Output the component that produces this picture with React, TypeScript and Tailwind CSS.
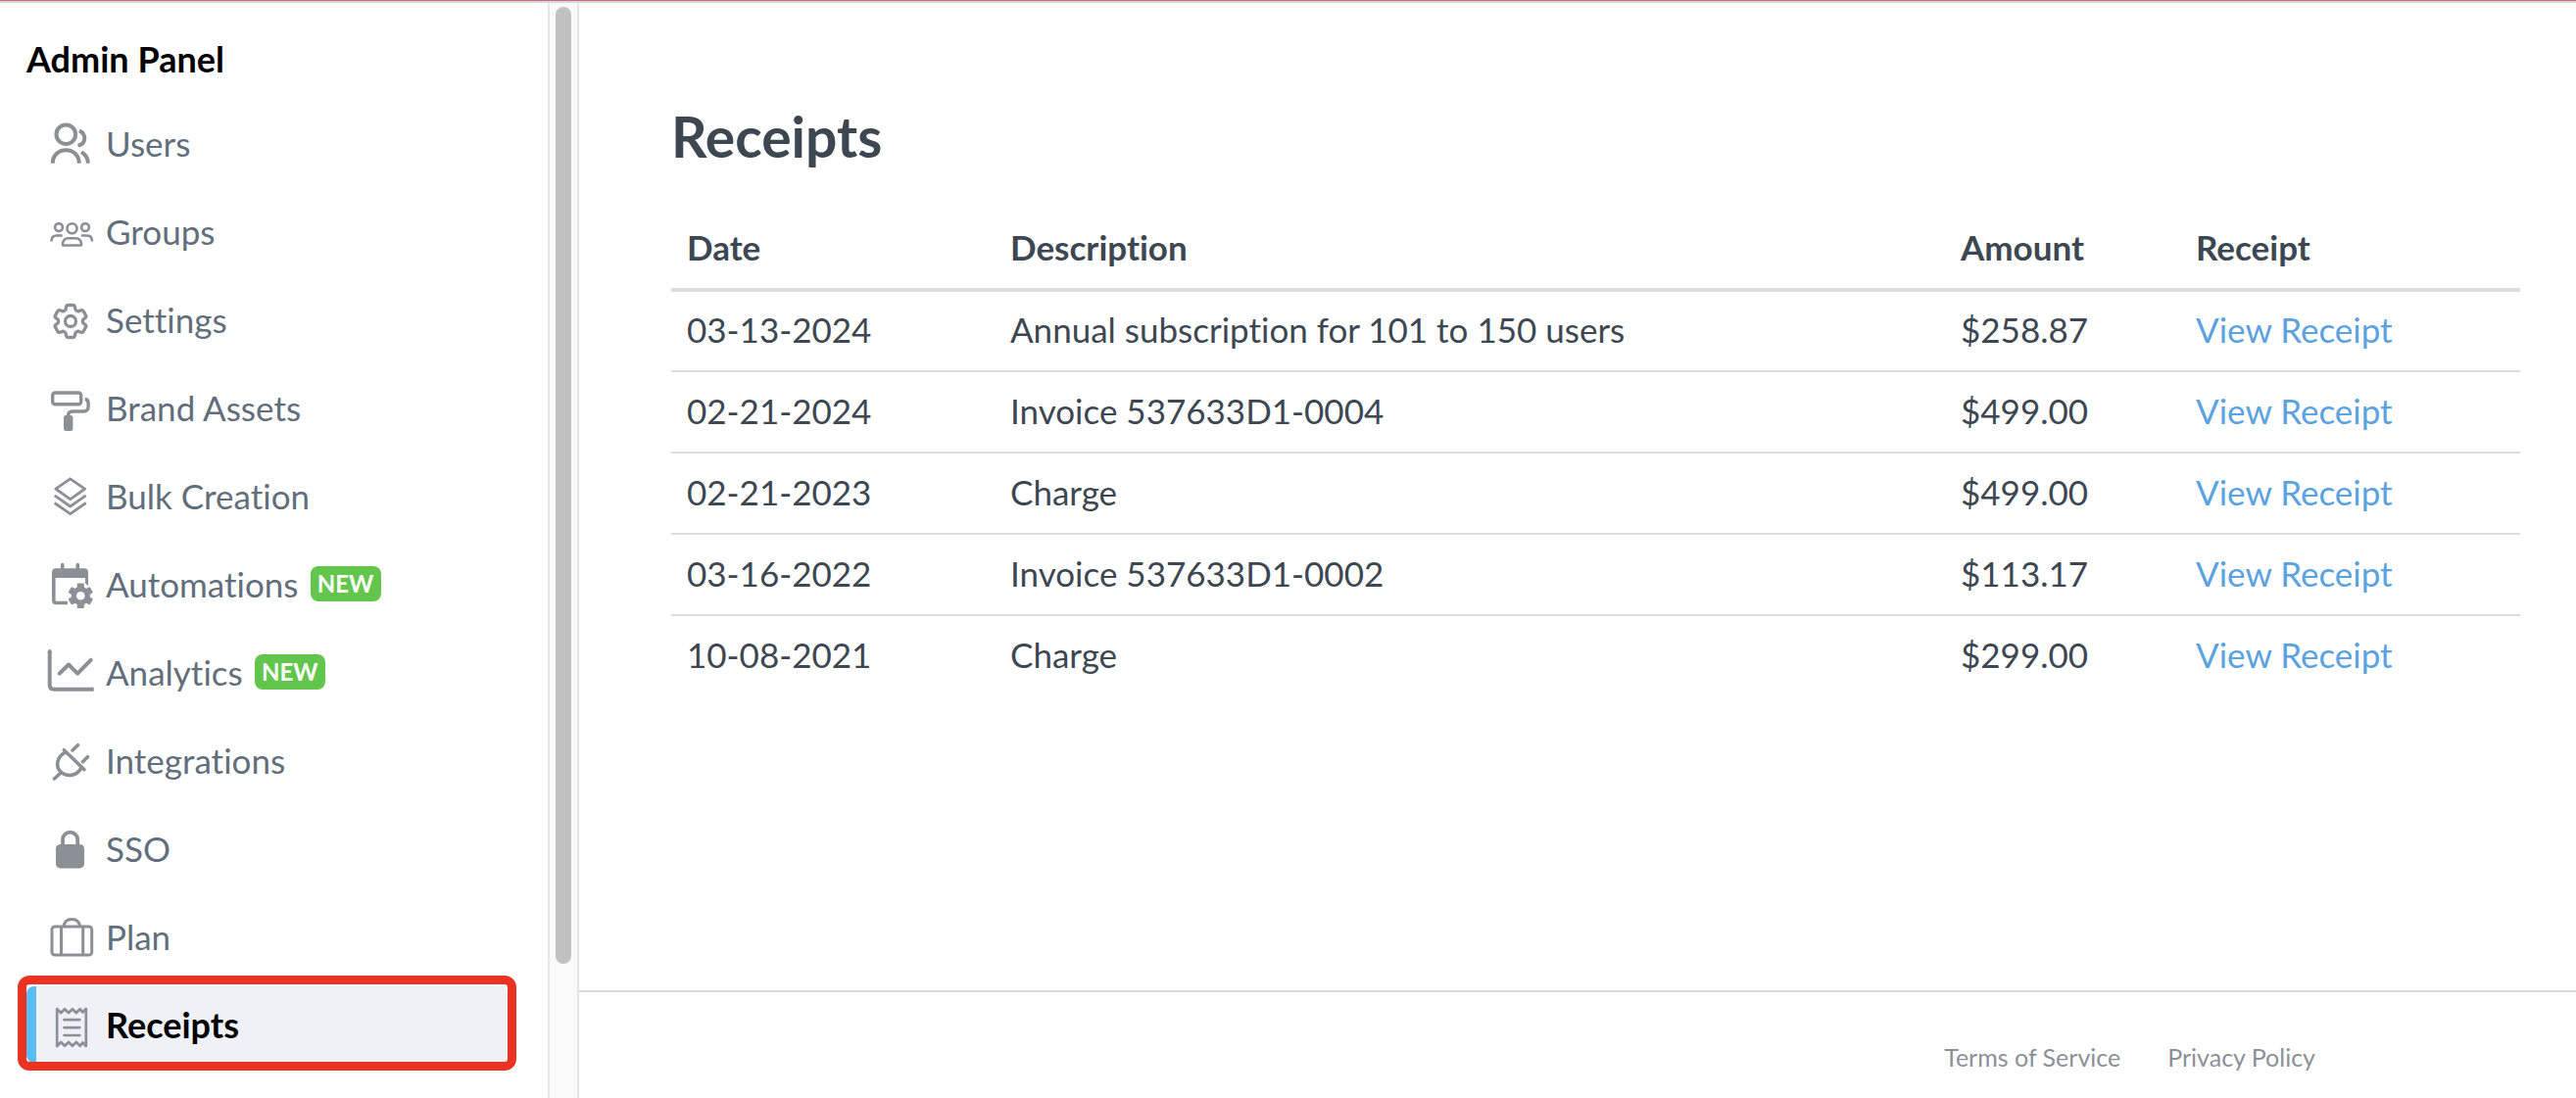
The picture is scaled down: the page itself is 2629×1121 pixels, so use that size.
import type { ReactNode } from "react";
import { HiOutlineCog6Tooth } from "react-icons/hi2";

type IconProps = { width?: number; children: ReactNode };

const Icon: React.FC<IconProps> = ({ width = 3, children }) => (
  <svg
    viewBox="0 0 48 48"
    fill="none"
    stroke="currentColor"
    strokeWidth={width}
    strokeLinejoin="round"
    className="size-12 overflow-visible"
    aria-hidden="true"
  >
    {children}
  </svg>
);

const UsersIcon = () => (
  <Icon width={4}>
    <circle cx="19.3" cy="15.2" r="9.8" />
    <path d="M33 11.3C40.5 15.5 40 25 31.5 26.6M5.7 44.7c0-8 6-13.5 13.6-13.5s13.5 5.5 13.5 13.5M35 33.2c4.5 2.5 6.8 6.5 6.8 11.5" />
  </Icon>
);

const GroupsIcon = () => (
  <Icon width={2.6}>
    <circle cx="12" cy="20" r="3.9" />
    <circle cx="25.5" cy="21.3" r="5" />
    <circle cx="39" cy="20" r="3.9" />
    <path d="M17 38.5h17c1 0 1.2-.5 1.1-1.3-.4-3.5-2.6-5.9-5.6-5.9h-8c-3 0-5.2 2.4-5.6 5.9-.1.8.1 1.3 1.1 1.3zM4.5 34.5c0-3.5 1.8-6 5-6h6.2M46 34.5c0-3.5-1.8-6-5-6h-6.2" />
  </Icon>
);

const SettingsIcon = () => (
  <span className="flex size-12 items-end justify-center">
    <HiOutlineCog6Tooth className="size-11" strokeWidth={1.8} aria-hidden="true" />
  </span>
);

const RollerIcon = () => (
  <Icon width={3.4}>
    <rect x="5.7" y="9" width="29" height="11.8" rx="2.5" />
    <path d="M38.8 15.5c2.4.3 3.3 1.6 3.3 4v3.5c0 3.5-1.6 5-5 5H26.5c-3.5 0-5 1.5-5 4.5" />
    <rect x="17" y="32" width="9.4" height="16" rx="2.5" fill="currentColor" stroke="none" />
  </Icon>
);

const LayersIcon = () => (
  <Icon width={2.8}>
    <path d="M23.7 6.8 38.6 17.2 23.7 27.7 8.8 17.2z" />
    <path d="M7.7 23.8 23.7 35 39.7 23.8M7.7 31.5l16 11.1 16-11.1" />
  </Icon>
);

const AutomationsIcon = () => (
  <Icon width={3.6}>
    <path d="M15.7 4.5V12M31.3 4.5V12" strokeLinecap="round" />
    <path d="M21 43.5H9.5q-2.700 0-2.700-2.700V15" />
    <path
      d="M5 18V12.5q0-4.200 4.200-4.200H37.800q4.200 0 4.200 4.200V26l-3-2.500V18z"
      fill="currentColor"
      stroke="none"
    />
    <g fill="currentColor" stroke="none">
      <rect x="30.8" y="23.6" width="7" height="25.4" rx="1" />
      <rect x="30.8" y="23.6" width="7" height="25.4" rx="1" transform="rotate(60 34.3 36.3)" />
      <rect x="30.8" y="23.6" width="7" height="25.4" rx="1" transform="rotate(120 34.3 36.3)" />
      <circle cx="34.3" cy="36.3" r="9.6" />
      <circle cx="34.3" cy="36.3" r="4.3" fill="#fff" />
    </g>
  </Icon>
);

const AnalyticsIcon = () => (
  <Icon width={4}>
    <path d="M2.7 3v34.5q0 4.2 4.2 4.2H47.7" />
    <path d="M2.7 3v1M12.7 25.7l9.3-9.2 9.2 9.2 13.5-13.9" strokeLinecap="round" />
  </Icon>
);

const PlugIcon = () => (
  <Icon width={3.6}>
    <path d="M17.3 13.7 38 33.7M18.8 16.2C10 20.5 8.2 30.5 14 36s16 4.8 21-4" strokeLinecap="round" />
    <path d="M7.5 43l6.5-6M26 14l5.5-5.3M36.5 25.7l5-5" strokeLinecap="round" />
  </Icon>
);

const LockIcon = () => (
  <Icon width={3.8}>
    <path d="M16 22V15.3a7.6 7.6 0 0 1 15.2 0V22" />
    <rect x="9" y="20" width="29" height="24.4" rx="4.5" fill="currentColor" stroke="none" />
  </Icon>
);

const SuitcaseIcon = () => (
  <Icon width={3}>
    <rect x="5" y="14" width="40.7" height="29" rx="3" />
    <path d="M14.5 14v29M36.7 14v29M17 14c.5-5 3.5-7.400 8.300-7.400S33 9 33.700 14" />
  </Icon>
);

const ReceiptIcon = () => (
  <Icon width={2.7}>
    <path d="M10.2 8l4 4 3.9-3.8 3.9 3.8 3.9-3.8 3.9 3.8 3.9-3.8 2.6 3.3 3.5-3.5v38l-3.5-3.5-2.600 3.300-3.900-3.800-3.900 3.800-3.900-3.800-3.900 3.800-3.900-3.800-4 4z" />
    <path d="M17.5 19.2h15.8M17.5 27.1h15.8M17.5 35h15.8" strokeLinecap="round" />
  </Icon>
);

const navItems = [
  { label: "Users", icon: UsersIcon },
  { label: "Groups", icon: GroupsIcon },
  { label: "Settings", icon: SettingsIcon },
  { label: "Brand Assets", icon: RollerIcon },
  { label: "Bulk Creation", icon: LayersIcon },
  { label: "Automations", icon: AutomationsIcon, isNew: true },
  { label: "Analytics", icon: AnalyticsIcon, isNew: true },
  { label: "Integrations", icon: PlugIcon },
  { label: "SSO", icon: LockIcon },
  { label: "Plan", icon: SuitcaseIcon },
  { label: "Receipts", icon: ReceiptIcon, active: true },
];

const receipts = [
  { date: "03-13-2024", description: "Annual subscription for 101 to 150 users", amount: "$258.87" },
  { date: "02-21-2024", description: "Invoice 537633D1-0004", amount: "$499.00" },
  { date: "02-21-2023", description: "Charge", amount: "$499.00" },
  { date: "03-16-2022", description: "Invoice 537633D1-0002", amount: "$113.17" },
  { date: "10-08-2021", description: "Charge", amount: "$299.00" },
];

const Sidebar = () => (
  <aside className="flex w-[591px] shrink-0">
    <nav className="flex-1 pt-8 pr-10 pl-[27px]" aria-label="Admin Panel">
      <h2 className="mb-[22px] text-[36px] leading-[50px] font-bold text-black">Admin Panel</h2>
      <ul className="flex flex-col gap-3">
        {navItems.map(({ label, icon: ItemIcon, isNew, active }) => (
          <li key={label} className="relative">
            <a
              href="#"
              aria-current={active ? "page" : undefined}
              className={`flex h-[78px] items-center overflow-hidden rounded-lg ${
                active ? "bg-[#eff1f6] text-[36px] font-bold text-black" : "text-[#626e7b]"
              }`}
            >
              <span className={`mr-[11px] h-full w-[10px] ${active ? "bg-[#58bdf5]" : ""}`} />
              <span className="mr-3 text-[#8b9097]">
                <ItemIcon />
              </span>
              {label}
              {isNew && (
                <span className="ml-3 flex h-9 w-[72px] items-center justify-center rounded-lg bg-[#63c64c] text-[24px] font-bold text-white">
                  NEW
                </span>
              )}
            </a>
            {active && (
              <span className="pointer-events-none absolute -top-[11px] -right-2 -bottom-2 -left-[9px] rounded-xl border-[9px] border-[#ea3323]" />
            )}
          </li>
        ))}
      </ul>
    </nav>
    {/* scroll track */}
    <div className="flex w-8 flex-col border-x-2 border-[#e6e6ea] bg-[#fafafa] py-1">
      <div className="ml-1.5 w-4 flex-[88] rounded-full bg-[#c1c1c1]" />
      <div className="flex-[12]" />
    </div>
  </aside>
);

const ReceiptsTable = () => (
  <table className="w-full table-fixed text-left">
    <thead>
      <tr className="h-[91px] border-b-4 border-[#dddddd]">
        <th className="w-[330px] px-4 pt-1">Date</th>
        <th className="px-4 pt-1">Description</th>
        <th className="w-[240px] px-4 pt-1">Amount</th>
        <th className="w-[347px] px-4 pt-1">Receipt</th>
      </tr>
    </thead>
    <tbody>
      {receipts.map((row) => (
        <tr key={row.date} className="h-[83px] border-b-2 border-[#dddddd] last:border-b-0">
          <td className="px-4 pb-1">{row.date}</td>
          <td className="px-4 pb-1">{row.description}</td>
          <td className="px-4 pb-1">{row.amount}</td>
          <td className="px-4 pb-1">
            <a href="#" className="text-[#5ba2e0]">
              View Receipt
            </a>
          </td>
        </tr>
      ))}
    </tbody>
  </table>
);

const App: React.FC = () => {
  return (
    <div className="flex min-h-screen flex-col bg-white font-['Lato','Open_Sans',sans-serif] text-[35px] leading-[42px] text-[#3d4752] [font-variant-ligatures:none]">
      <div className="h-[3px] border-t border-[#cd6a74] bg-[#d6d6df]" />
      <div className="flex flex-1">
        <Sidebar />
        <div className="flex min-w-0 flex-1 flex-col">
          <main className="flex-1 pt-[102px] pr-[57px] pl-[94px]">
            <h1 className="mb-8 text-[57px] leading-[68px] font-bold">Receipts</h1>
            <ReceiptsTable />
          </main>
          <footer className="flex h-[110px] items-center justify-end gap-12 border-t-2 border-[#d9d9df] pt-6 pr-[266px] text-[25px] text-[#8b9097]">
            <a href="#">Terms of Service</a>
            <a href="#">Privacy Policy</a>
          </footer>
        </div>
      </div>
    </div>
  );
};

export default App;
